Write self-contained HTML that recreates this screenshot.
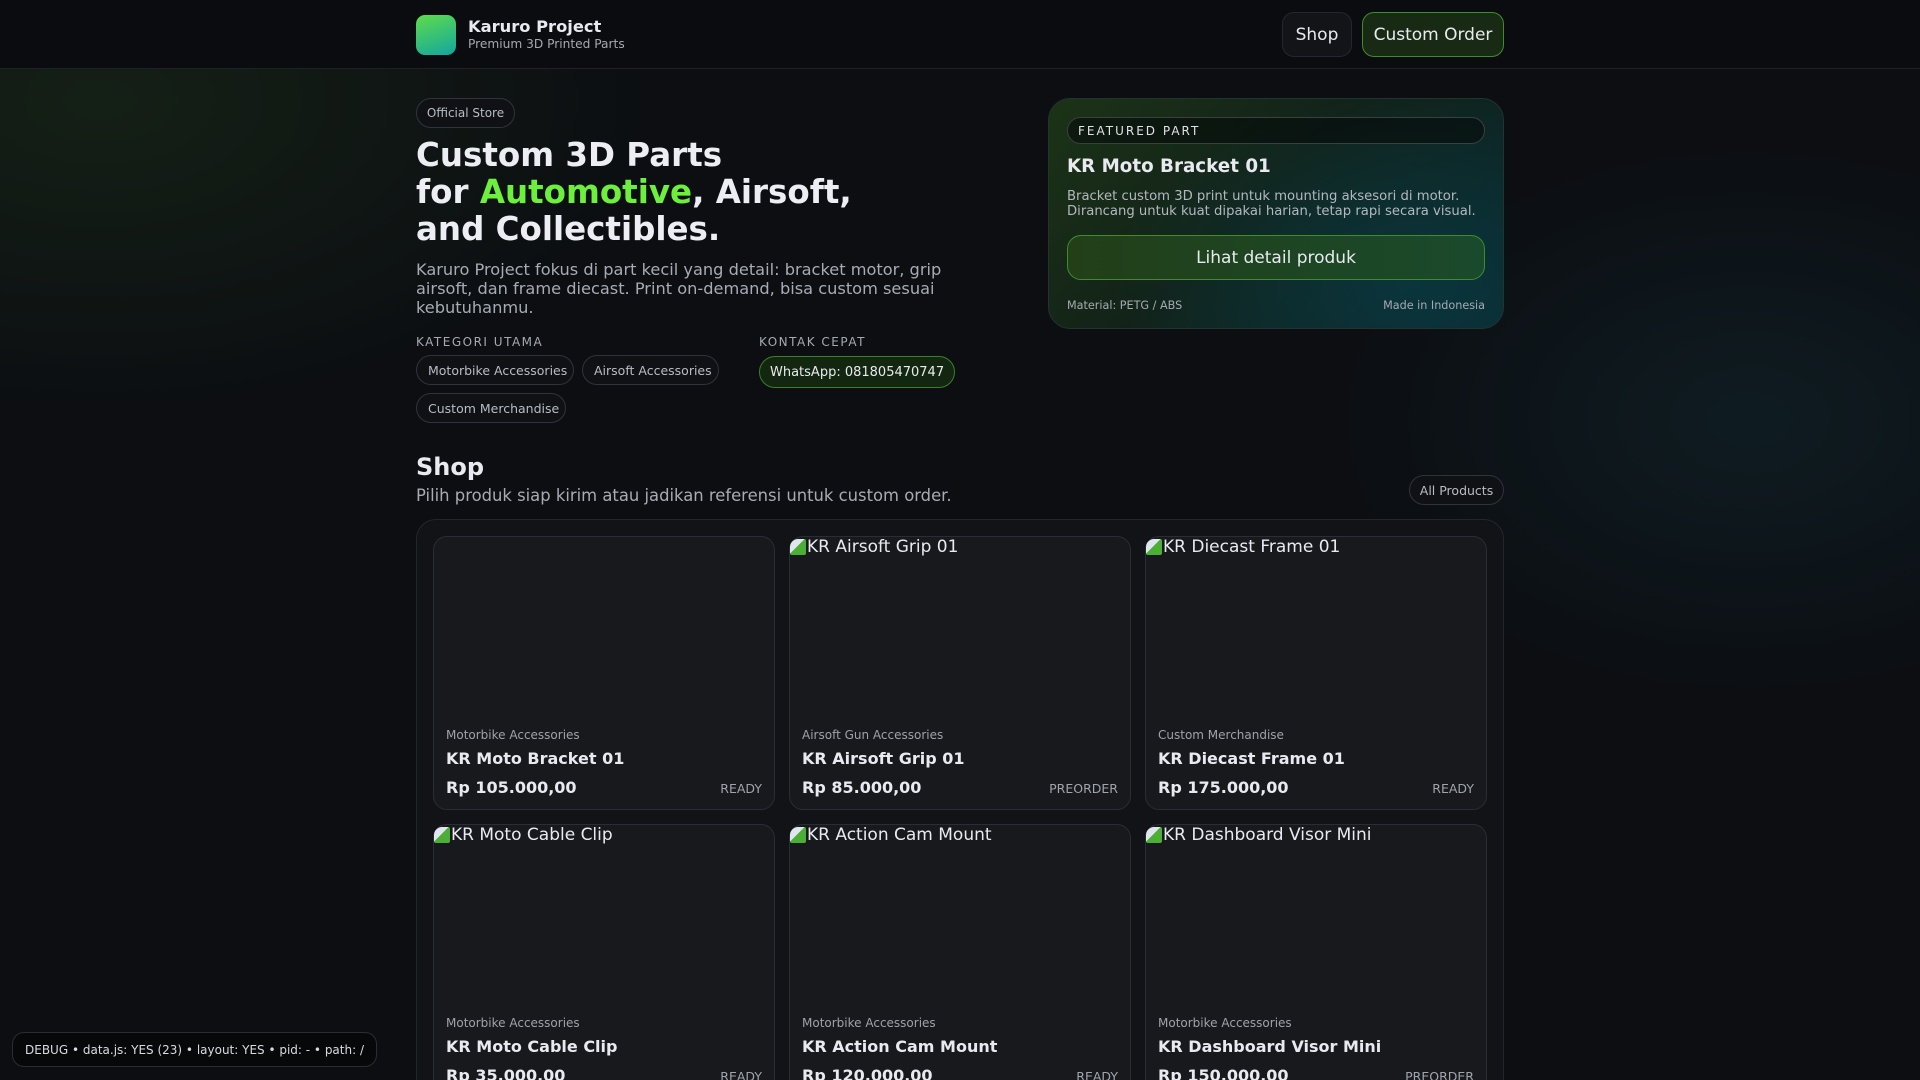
<!DOCTYPE html>
<html><head><meta charset="utf-8"><style>
*{box-sizing:border-box;margin:0;padding:0}
html,body{width:1920px;height:1080px;overflow:hidden}
body{font-family:"DejaVu Sans","Liberation Sans",sans-serif;color:#e8eaf0;background:#0c0e12}
#w{position:relative;width:1920px;height:1080px;overflow:hidden}
.bg{position:absolute;inset:0;background:radial-gradient(ellipse 800px 450px at 100px 100px,rgba(50,95,35,.22),transparent 70%),radial-gradient(ellipse 600px 400px at 1750px 420px,rgba(20,70,80,.25),transparent 70%)}
header{position:absolute;left:0;top:0;width:1920px;height:69px;background:#0a0c0f;border-bottom:1px solid #1e2126}
.logo{position:absolute;left:416px;top:15px;width:40px;height:40px;border-radius:9px;background:linear-gradient(160deg,#5fdc4a,#12a6a0)}
.bt{position:absolute;left:468px;top:17px;font-weight:bold;font-size:16.3px}
.bs{position:absolute;left:468px;top:37px;font-size:12.2px;color:#a5a9b2}
.btn{position:absolute;top:12px;height:45px;border-radius:12px;font-size:17px;display:flex;align-items:center;justify-content:center}
.pill{position:absolute;height:30px;border:1px solid #30343a;border-radius:15px;font-size:12.5px;color:#b8bcc4;display:flex;align-items:center;padding:0 11px;background:#0f1115;white-space:nowrap}
h1{position:absolute;left:416px;top:137px;font-size:32.5px;line-height:37px;font-weight:bold;color:#eceef4}
.p{position:absolute;left:416px;top:260px;width:540px;font-size:16.2px;line-height:19px;color:#a7abb4}
.lab{position:absolute;font-size:12px;letter-spacing:1.5px;color:#a5a9b2;top:335px}
.feat{position:absolute;left:1048px;top:98px;width:456px;height:231px;border-radius:22px;border:1px solid #1f3530;background:radial-gradient(ellipse 300px 200px at 80% 80%,rgba(10,60,70,.7),transparent),linear-gradient(135deg,#1c3317 0%,#122218 45%,#08262c 100%)}
.card{position:absolute;width:342px;height:274px;background:#17191d;border:1px solid #2a2d33;border-radius:14px}
.alt{position:absolute;left:0;top:0;font-size:17px;color:#e8eaf0;display:flex;align-items:center;white-space:nowrap}
.alt i{display:inline-block;width:16px;height:16px;background:linear-gradient(135deg,#dfe6ee 45%,#4caf35 46%);border-radius:8px 2px 2px 2px;margin-right:1px}
.cat{position:absolute;left:12px;top:191px;font-size:12px;color:#9ea2ab}
.nm{position:absolute;left:12px;top:212px;font-size:16px;font-weight:bold}
.pr{position:absolute;left:12px;top:241px;font-size:16px;font-weight:bold}
.st{position:absolute;right:12px;top:244px;font-size:12.5px;color:#a0a4ad}
</style></head><body><div id="w"><div class="bg"></div>
<header><div class="logo"></div><div class="bt">Karuro Project</div><div class="bs">Premium 3D Printed Parts</div>
<div class="btn" style="left:1282px;width:70px;background:#121418;border:1px solid #24272d;color:#e8eaf0">Shop</div>
<div class="btn" style="left:1362px;width:142px;background:#182a14;border:1px solid #3f8d2a;color:#e8eaf0">Custom Order</div></header>
<div class="pill" style="left:416px;top:98px;width:99px;justify-content:center;padding:0;font-size:12px">Official Store</div>
<h1>Custom 3D Parts<br>for <span style="color:#6cf03c">Automotive</span>, Airsoft,<br>and Collectibles.</h1>
<div class="p">Karuro Project fokus di part kecil yang detail: bracket motor, grip airsoft, dan frame diecast. Print on-demand, bisa custom sesuai kebutuhanmu.</div>
<div class="lab" style="left:416px">KATEGORI UTAMA</div>
<div class="lab" style="left:759px">KONTAK CEPAT</div>
<div class="pill" style="left:416px;top:355px;width:158px">Motorbike Accessories</div>
<div class="pill" style="left:582px;top:355px;width:137px">Airsoft Accessories</div>
<div class="pill" style="left:416px;top:393px;width:150px">Custom Merchandise</div>
<div class="pill" style="left:759px;top:356px;width:196px;height:32px;border-radius:16px;background:#13260f;border-color:#3d7f28;color:#e8eaf0;font-size:13px;padding:0 10px">WhatsApp: 081805470747</div>
<div class="feat">
<div style="position:absolute;left:18px;top:18px;width:418px;height:27px;border:1px solid #3a4040;border-radius:14px;background:rgba(5,10,10,.6);font-size:12px;letter-spacing:2px;padding:6px 10px;color:#e0e3e8">FEATURED PART</div>
<div style="position:absolute;left:18px;top:57px;font-size:18.3px;font-weight:bold">KR Moto Bracket 01</div>
<div style="position:absolute;left:18px;top:90px;font-size:13.2px;line-height:15px;color:#b3b8bf">Bracket custom 3D print untuk mounting aksesori di motor.<br>Dirancang untuk kuat dipakai harian, tetap rapi secara visual.</div>
<div style="position:absolute;left:18px;top:136px;width:418px;height:45px;border:1px solid #3f8d2a;border-radius:14px;background:linear-gradient(90deg,#223f18,#1a4a2c);display:flex;align-items:center;justify-content:center;font-size:17px">Lihat detail produk</div>
<div style="position:absolute;left:18px;top:200px;font-size:11.2px;color:#a5aab0">Material: PETG / ABS</div>
<div style="position:absolute;right:18px;top:200px;font-size:11.2px;color:#a5aab0">Made in Indonesia</div>
</div>
<div style="position:absolute;left:416px;top:453px;font-size:24px;font-weight:bold">Shop</div>
<div style="position:absolute;left:416px;top:486px;font-size:16.4px;color:#a7abb4">Pilih produk siap kirim atau jadikan referensi untuk custom order.</div>
<div class="pill" style="left:1409px;top:475px;width:95px;justify-content:center;padding:0">All Products</div>
<div style="position:absolute;left:416px;top:519px;width:1088px;height:620px;background:#111317;border:1px solid #23262b;border-radius:20px"></div>
<div class="card" style="left:433px;top:536px"><div class="cat">Motorbike Accessories</div><div class="nm">KR Moto Bracket 01</div><div class="pr">Rp 105.000,00</div><div class="st">READY</div></div>
<div class="card" style="left:789px;top:536px"><div class="alt"><i></i>KR Airsoft Grip 01</div><div class="cat">Airsoft Gun Accessories</div><div class="nm">KR Airsoft Grip 01</div><div class="pr">Rp 85.000,00</div><div class="st">PREORDER</div></div>
<div class="card" style="left:1145px;top:536px"><div class="alt"><i></i>KR Diecast Frame 01</div><div class="cat">Custom Merchandise</div><div class="nm">KR Diecast Frame 01</div><div class="pr">Rp 175.000,00</div><div class="st">READY</div></div>
<div class="card" style="left:433px;top:824px"><div class="alt"><i></i>KR Moto Cable Clip</div><div class="cat">Motorbike Accessories</div><div class="nm">KR Moto Cable Clip</div><div class="pr">Rp 35.000,00</div><div class="st">READY</div></div>
<div class="card" style="left:789px;top:824px"><div class="alt"><i></i>KR Action Cam Mount</div><div class="cat">Motorbike Accessories</div><div class="nm">KR Action Cam Mount</div><div class="pr">Rp 120.000,00</div><div class="st">READY</div></div>
<div class="card" style="left:1145px;top:824px"><div class="alt"><i></i>KR Dashboard Visor Mini</div><div class="cat">Motorbike Accessories</div><div class="nm">KR Dashboard Visor Mini</div><div class="pr">Rp 150.000,00</div><div class="st">PREORDER</div></div>
<div style="position:absolute;left:12px;top:1032px;width:365px;height:35px;border:1px solid #2a2d33;border-radius:12px;background:#07080a;font-size:12px;color:#d8dbe0;padding:10px 12px;white-space:nowrap">DEBUG • data.js: YES (23) • layout: YES • pid: - • path: /</div>
</div></body></html>
